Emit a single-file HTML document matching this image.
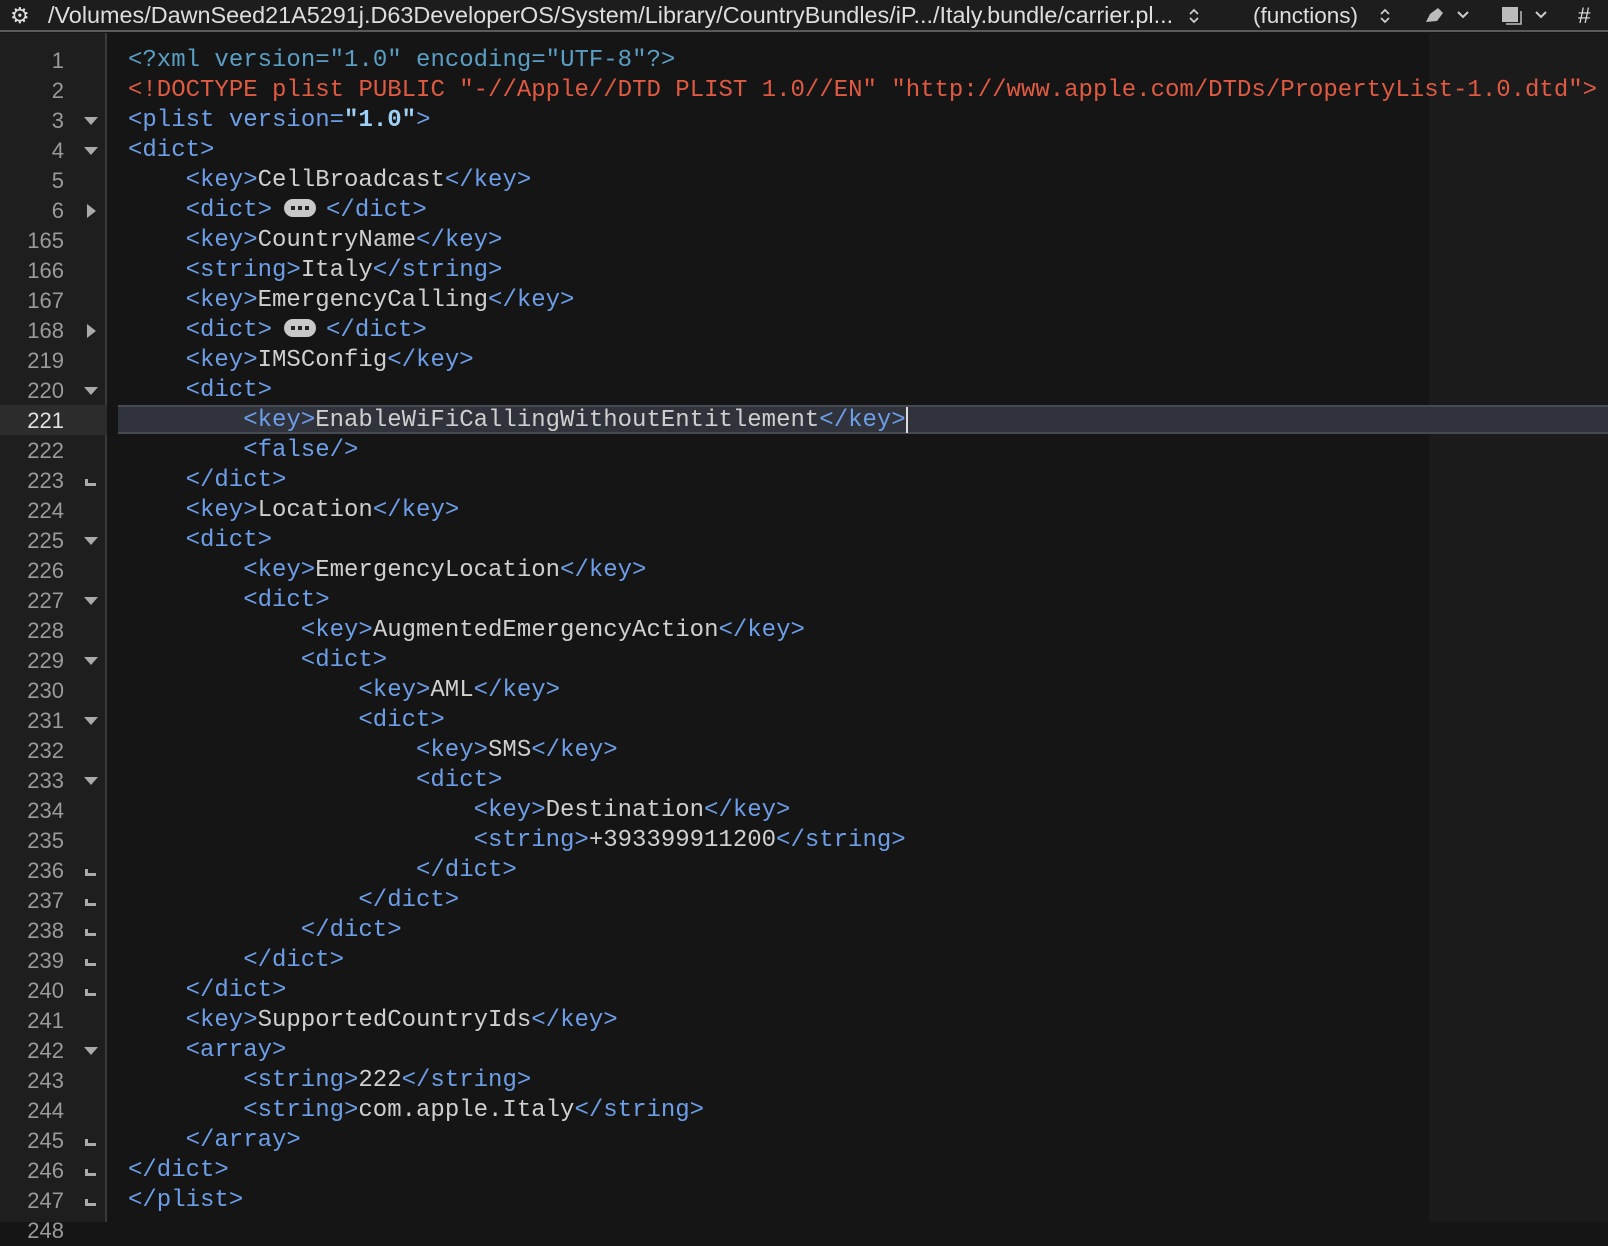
<!DOCTYPE html>
<html><head><meta charset="utf-8"><style>
*{margin:0;padding:0;box-sizing:border-box}
body{width:1608px;height:1222px;overflow:hidden;background:#151515;position:relative;font-family:"Liberation Mono",monospace}
#bar{position:absolute;left:0;top:0;width:1608px;height:32px;background:#1d1d1d;border-bottom:2px solid #5a5a5a;color:#dedede;font-family:"Liberation Sans",sans-serif;font-size:22.5px;line-height:31px;white-space:nowrap}
#bar span,#bar svg{position:absolute;top:0}
#gut{position:absolute;left:0;top:33px;width:107px;height:1189px;background:#1e1e1e;border-right:2px solid #3a3a3a}
#guide{position:absolute;left:1429px;top:33px;width:179px;height:1189px;background:#1b1b1b}
.ln{position:absolute;left:0;width:64px;text-align:right;color:#9a9a9a;font-size:22px;height:30px;line-height:30px;font-family:"Liberation Sans",sans-serif}
.f{position:absolute;left:84px;width:14px;height:30px}
.code{position:absolute;left:128px;font-size:24px;height:30px;line-height:30px;white-space:pre;color:#cfcfcf}
.t{color:#6d9ee8}.d{color:#5a9ec4}.r{color:#e05a42}.b{color:#9fd0f5;font-weight:bold}
.badge{display:inline-block;width:32px;height:18px;background:#c8c8c8;border-radius:9px;vertical-align:-1px;margin:0 10px 0 12px;position:relative}
.badge:after{content:"";position:absolute;left:7px;top:7px;width:4px;height:4px;background:#222;box-shadow:7px 0 #222,14px 0 #222}
#hl{position:absolute;left:118px;top:405px;width:1490px;height:29px;background:#30333b;border-top:2px solid #464a52;border-bottom:2px solid #464a52}
#hlg{position:absolute;left:0;top:405px;width:107px;height:30px;background:#2c2c2c}
</style></head><body>
<div id="bar">
<span style="left:10px;font-size:22px">⚙</span>
<span style="left:48px;font-size:23.4px">/Volumes/DawnSeed21A5291j.D63DeveloperOS/System/Library/CountryBundles/iP.../Italy.bundle/carrier.pl...</span>
<svg style="left:1188px;top:7px" width="12" height="18" viewBox="0 0 12 18"><path d="M2 7l4-4 4 4M2 11l4 4 4-4" stroke="#ccc" stroke-width="1.8" fill="none"/></svg>
<span style="left:1253px">(functions)</span>
<svg style="left:1379px;top:7px" width="12" height="18" viewBox="0 0 12 18"><path d="M2 7l4-4 4 4M2 11l4 4 4-4" stroke="#ccc" stroke-width="1.8" fill="none"/></svg>
<svg style="left:1424px;top:6px" width="22" height="20" viewBox="0 0 22 20"><path d="M2 16l4-8 8-6 5 5-6 8z" fill="#bbb"/></svg>
<svg style="left:1456px;top:10px" width="14" height="10" viewBox="0 0 14 10"><path d="M2 2l5 5 5-5" stroke="#ccc" stroke-width="2" fill="none"/></svg>
<svg style="left:1500px;top:5px" width="24" height="22" viewBox="0 0 24 22"><rect x="2" y="2" width="16" height="15" fill="#bbb"/><path d="M6 19h15V6" stroke="#bbb" stroke-width="1.5" fill="none"/></svg>
<svg style="left:1534px;top:10px" width="14" height="10" viewBox="0 0 14 10"><path d="M2 2l5 5 5-5" stroke="#ccc" stroke-width="2" fill="none"/></svg>
<span style="left:1578px">#</span>
</div>
<div id="gut"></div>
<div id="guide"></div>
<div id="hlg"></div>
<div id="hl"></div>
<div id="content"></div>
<script>
const L=[
["1","",0,'<span class="d">&lt;?xml version="1.0" encoding="UTF-8"?&gt;</span>'],
["2","",0,'<span class="r">&lt;!DOCTYPE plist PUBLIC "-//Apple//DTD PLIST 1.0//EN" "http://www.apple.com/DTDs/PropertyList-1.0.dtd"&gt;</span>'],
["3","d",0,'<span class="t">&lt;plist version=</span><span class="b">"1.0"</span><span class="t">&gt;</span>'],
["4","d",0,'<span class="t">&lt;dict&gt;</span>'],
["5","",1,'<span class="t">&lt;key&gt;</span>CellBroadcast<span class="t">&lt;/key&gt;</span>'],
["6","r",1,'<span class="t">&lt;dict&gt;</span><span class="badge"></span><span class="t">&lt;/dict&gt;</span>'],
["165","",1,'<span class="t">&lt;key&gt;</span>CountryName<span class="t">&lt;/key&gt;</span>'],
["166","",1,'<span class="t">&lt;string&gt;</span>Italy<span class="t">&lt;/string&gt;</span>'],
["167","",1,'<span class="t">&lt;key&gt;</span>EmergencyCalling<span class="t">&lt;/key&gt;</span>'],
["168","r",1,'<span class="t">&lt;dict&gt;</span><span class="badge"></span><span class="t">&lt;/dict&gt;</span>'],
["219","",1,'<span class="t">&lt;key&gt;</span>IMSConfig<span class="t">&lt;/key&gt;</span>'],
["220","d",1,'<span class="t">&lt;dict&gt;</span>'],
["221","",2,'<span class="t">&lt;key&gt;</span>EnableWiFiCallingWithoutEntitlement<span class="t">&lt;/key&gt;</span><span style="display:inline-block;width:2px;height:26px;background:#ddd;vertical-align:middle"></span>'],
["222","",2,'<span class="t">&lt;false/&gt;</span>'],
["223","e",1,'<span class="t">&lt;/dict&gt;</span>'],
["224","",1,'<span class="t">&lt;key&gt;</span>Location<span class="t">&lt;/key&gt;</span>'],
["225","d",1,'<span class="t">&lt;dict&gt;</span>'],
["226","",2,'<span class="t">&lt;key&gt;</span>EmergencyLocation<span class="t">&lt;/key&gt;</span>'],
["227","d",2,'<span class="t">&lt;dict&gt;</span>'],
["228","",3,'<span class="t">&lt;key&gt;</span>AugmentedEmergencyAction<span class="t">&lt;/key&gt;</span>'],
["229","d",3,'<span class="t">&lt;dict&gt;</span>'],
["230","",4,'<span class="t">&lt;key&gt;</span>AML<span class="t">&lt;/key&gt;</span>'],
["231","d",4,'<span class="t">&lt;dict&gt;</span>'],
["232","",5,'<span class="t">&lt;key&gt;</span>SMS<span class="t">&lt;/key&gt;</span>'],
["233","d",5,'<span class="t">&lt;dict&gt;</span>'],
["234","",6,'<span class="t">&lt;key&gt;</span>Destination<span class="t">&lt;/key&gt;</span>'],
["235","",6,'<span class="t">&lt;string&gt;</span>+393399911200<span class="t">&lt;/string&gt;</span>'],
["236","e",5,'<span class="t">&lt;/dict&gt;</span>'],
["237","e",4,'<span class="t">&lt;/dict&gt;</span>'],
["238","e",3,'<span class="t">&lt;/dict&gt;</span>'],
["239","e",2,'<span class="t">&lt;/dict&gt;</span>'],
["240","e",1,'<span class="t">&lt;/dict&gt;</span>'],
["241","",1,'<span class="t">&lt;key&gt;</span>SupportedCountryIds<span class="t">&lt;/key&gt;</span>'],
["242","d",1,'<span class="t">&lt;array&gt;</span>'],
["243","",2,'<span class="t">&lt;string&gt;</span>222<span class="t">&lt;/string&gt;</span>'],
["244","",2,'<span class="t">&lt;string&gt;</span>com.apple.Italy<span class="t">&lt;/string&gt;</span>'],
["245","e",1,'<span class="t">&lt;/array&gt;</span>'],
["246","e",0,'<span class="t">&lt;/dict&gt;</span>'],
["247","e",0,'<span class="t">&lt;/plist&gt;</span>'],
["248","",0,'']
];
let h="";
L.forEach((l,i)=>{const y=46+i*30;
h+=`<div class="ln" style="top:${y}px;${l[0]=="221"?"color:#e0e0e0":""}">${l[0]}</div>`;
let f="";
if(l[1]=="d")f=`<svg class="f" style="top:${y}px" viewBox="0 0 14 30"><path d="M0 11h14l-7 8z" fill="#aaa"/></svg>`;
if(l[1]=="r")f=`<svg class="f" style="top:${y}px" viewBox="0 0 14 30"><path d="M3 8v14l9-7z" fill="#aaa"/></svg>`;
if(l[1]=="e")f=`<svg class="f" style="top:${y}px" viewBox="0 0 14 30"><path d="M1 13h3v4h8v3H1z" fill="#aaa"/></svg>`;
h+=f;
h+=`<div class="code" style="top:${y}px;left:${128+l[2]*57.6}px">${l[3]}</div>`;});
document.getElementById("content").innerHTML=h;
</script>
</body></html>
